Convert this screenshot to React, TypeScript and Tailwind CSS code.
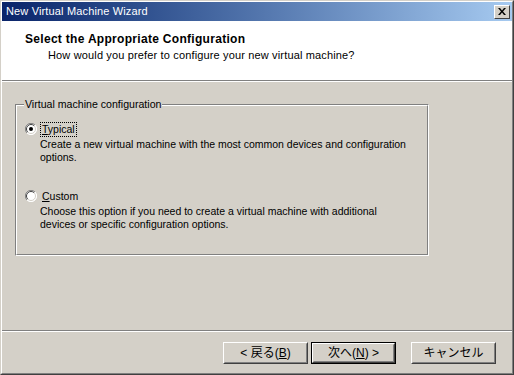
import React from "react";

const ui = { fontFamily: '"Liberation Sans", Arial, "Noto Sans CJK JP", sans-serif' };

function Radio({ checked }: { checked?: boolean }) {
  return (
    <svg width="12" height="12" viewBox="0 0 12 12" className="shrink-0">
      <circle cx="6" cy="6" r="5.5" fill="#ffffff" />
      <path d="M10 2 A5.5 5.5 0 0 0 2 10" stroke="#808080" strokeWidth="1" fill="none" />
      <path d="M9.2 2.8 A4.5 4.5 0 0 0 2.8 9.2" stroke="#404040" strokeWidth="1" fill="none" />
      <path d="M2 10 A5.5 5.5 0 0 0 10 2" stroke="#ffffff" strokeWidth="1" fill="none" />
      <path d="M2.8 9.2 A4.5 4.5 0 0 0 9.2 2.8" stroke="#d4d0c8" strokeWidth="1" fill="none" />
      {checked && <circle cx="6" cy="6" r="2" fill="#000000" />}
    </svg>
  );
}

function Button({ children, primary }: { children: React.ReactNode; primary?: boolean }) {
  return (
    <div className={primary ? "border border-black" : ""}>
      <div
        className={
          "flex items-center justify-center bg-[#d4d0c8] border border-t-white border-l-white border-r-[#404040] border-b-[#404040] " +
          (primary ? "w-[83px] h-[20px]" : "w-[85px] h-[22px]")
        }
      >
        <div className="w-full h-full flex items-center justify-center border border-transparent border-r-[#808080] border-b-[#808080] text-[12px] text-black">
          {children}
        </div>
      </div>
    </div>
  );
}

export default function App() {
  return (
    <div
      className="w-[514px] h-[375px] overflow-hidden bg-[#d4d0c8] border border-t-[#d4d0c8] border-l-[#d4d0c8] border-r-[#404040] border-b-[#404040]"
      style={ui}
    >
      <div className="h-full flex flex-col border border-t-white border-l-white border-r-[#808080] border-b-[#808080]">
        {/* Title bar */}
        <div className="h-[19px] flex items-center justify-between pl-[4px] pr-[2px] bg-gradient-to-r from-[#0a246a] to-[#a6caf0]">
          <span className="text-white text-[11px] leading-none tracking-[0.15px]">New Virtual Machine Wizard</span>
          <div className="w-[16px] h-[14px] bg-[#d4d0c8] border border-t-white border-l-white border-r-[#404040] border-b-[#404040] flex items-center justify-center">
            <svg width="8" height="7" viewBox="0 0 8 7">
              <path d="M0 0h2l2 2.5L6 0h2L5 3.5 8 7H6L4 4.5 2 7H0l3-3.5z" fill="#000" />
            </svg>
          </div>
        </div>

        {/* Header */}
        <div className="h-[59px] bg-white pl-[23px] pt-[11px]">
          <div className="text-[12px] font-bold text-black leading-[14px] tracking-[0.3px]">
            Select the Appropriate Configuration
          </div>
          <div className="text-[11px] text-black leading-[14px] pl-[23px] mt-[2px] tracking-[0.15px]">
            How would you prefer to configure your new virtual machine?
          </div>
        </div>
        <div className="h-px bg-[#808080]" />
        <div className="h-px bg-white" />

        {/* Body */}
        <div className="h-[248px] pl-[13px] pt-[22px]">
          <div className="relative w-[414px] h-[152px] border border-t-[#808080] border-l-[#808080] border-r-white border-b-white">
            <div className="w-full h-full border border-t-white border-l-white border-r-[#808080] border-b-[#808080]" />
            <span className="absolute left-[8px] top-[-8px] px-[1px] bg-[#d4d0c8] text-[10.6px] leading-[14px] text-black">
              Virtual machine configuration
            </span>
            <div className="absolute left-[9px] top-[16px] flex flex-col text-[10.5px] text-black">
              <div className="flex items-center gap-[3px] h-[16px]">
                <Radio checked />
                <span className="leading-[13px] px-[1px] border border-dotted border-black">
                  <span className="underline">T</span>ypical
                </span>
              </div>
              <div className="pl-[15px] leading-[13px] mt-[1px] whitespace-nowrap">
                Create a new virtual machine with the most common devices and configuration
                <br />
                options.
              </div>
              <div className="flex items-center gap-[3px] h-[16px] mt-[24px]">
                <Radio />
                <span className="leading-[13px] px-[1px] border border-transparent">
                  <span className="underline">C</span>ustom
                </span>
              </div>
              <div className="pl-[15px] leading-[13px] mt-[1px] whitespace-nowrap">
                Choose this option if you need to create a virtual machine with additional
                <br />
                devices or specific configuration options.
              </div>
            </div>
          </div>
        </div>
        <div className="h-px bg-[#808080]" />
        <div className="h-px bg-white" />

        {/* Buttons */}
        <div className="flex pt-[10px] pl-[221px]">
          <Button>&lt; 戻る(<span className="underline">B</span>)</Button>
          <div className="ml-[3px]">
            <Button primary>
              次へ(<span className="underline">N</span>) &gt;
            </Button>
          </div>
          <div className="ml-[15px]">
            <Button>キャンセル</Button>
          </div>
        </div>
      </div>
    </div>
  );
}
